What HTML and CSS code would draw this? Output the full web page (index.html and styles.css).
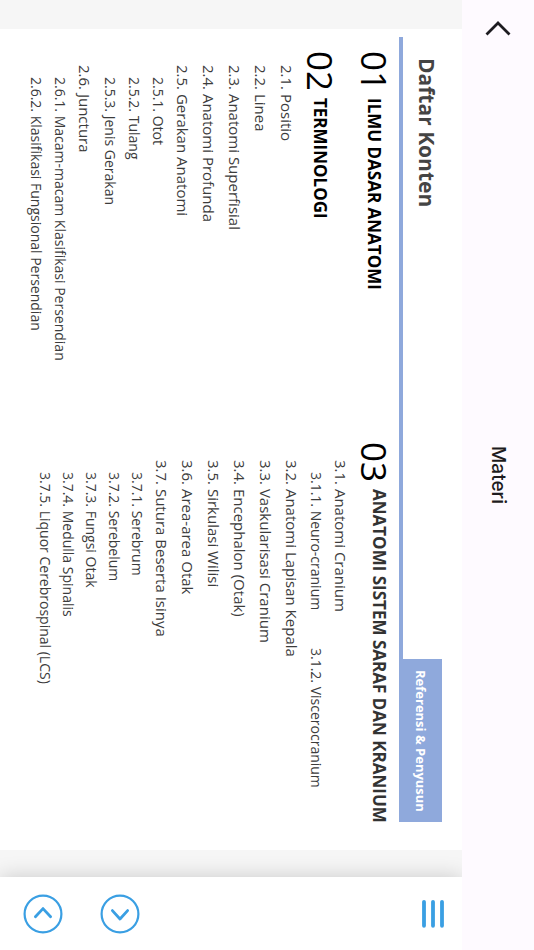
FILE: index.html
```html
<!DOCTYPE html>
<html lang="id">
<head>
<meta charset="utf-8">
<meta name="viewport" content="width=device-width, initial-scale=1">
<title>Materi</title>
<link rel="stylesheet" href="styles.css">
</head>
<body>
<div class="app">
  <header class="appbar">
    <button class="back" type="button" aria-label="Kembali">
      <svg width="28" height="18" viewBox="0 0 28 18" fill="none" stroke="#1d1b20" stroke-width="2.8"><path d="M2.500 15.500 14 4 25.500 15.500"/></svg>
    </button>
    <h1 class="appbar-title">Materi</h1>
  </header>
  <div class="content">
    <main class="viewer">
      <article class="slide">
        <div class="slide-head">
          <h2 class="slide-title">Daftar Konten</h2>
          <a class="tab" href="#referensi">Referensi &amp; Penyusun</a>
        </div>
        <div class="columns">
          <div class="column">
            <section class="chapter">
              <h3 class="chapter-head"><span class="num">01</span><span class="name">ILMU DASAR ANATOMI</span></h3>
            </section>
            <section class="chapter">
              <h3 class="chapter-head"><span class="num">02</span><span class="name">TERMINOLOGI</span></h3>
              <ul class="toc">
                <li><a href="#2-1">2.1. Positio</a></li>
                <li><a href="#2-2">2.2. Linea</a></li>
                <li><a href="#2-3">2.3. Anatomi Superfisial</a></li>
                <li><a href="#2-4">2.4. Anatomi Profunda</a></li>
                <li><a href="#2-5">2.5. Gerakan Anatomi</a></li>
                <li class="sub"><a href="#2-5-1">2.5.1. Otot</a></li>
                <li class="sub"><a href="#2-5-2">2.5.2. Tulang</a></li>
                <li class="sub"><a href="#2-5-3">2.5.3. Jenis Gerakan</a></li>
                <li><a href="#2-6">2.6. Junctura</a></li>
                <li class="sub"><a href="#2-6-1">2.6.1. Macam-macam Klasifikasi Persendian</a></li>
                <li class="sub"><a href="#2-6-2">2.6.2. Klasifikasi Fungsional Persendian</a></li>
              </ul>
            </section>
          </div>
          <div class="column column-wide">
            <section class="chapter">
              <h3 class="chapter-head raised"><span class="num">03</span><span class="name">ANATOMI SISTEM SARAF DAN KRANIUM</span></h3>
              <ul class="toc">
                <li><a href="#3-1">3.1. Anatomi Cranium</a></li>
                <li class="sub"><a href="#3-1-1">3.1.1. Neuro-cranium</a><a href="#3-1-2">3.1.2. Viscerocranium</a></li>
                <li><a href="#3-2">3.2. Anatomi Lapisan Kepala</a></li>
                <li><a href="#3-3">3.3. Vaskularisasi Cranium</a></li>
                <li><a href="#3-4">3.4. Encephalon (Otak)</a></li>
                <li><a href="#3-5">3.5. Sirkulasi Wilisi</a></li>
                <li><a href="#3-6">3.6. Area-area Otak</a></li>
                <li><a href="#3-7">3.7. Sutura Beserta Isinya</a></li>
                <li class="sub"><a href="#3-7-1">3.7.1. Serebrum</a></li>
                <li class="sub"><a href="#3-7-2">3.7.2. Serebelum</a></li>
                <li class="sub"><a href="#3-7-3">3.7.3. Fungsi Otak</a></li>
                <li class="sub"><a href="#3-7-4">3.7.4. Medulla Spinalis</a></li>
                <li class="sub"><a href="#3-7-5">3.7.5. Liquor Cerebrospinal (LCS)</a></li>
              </ul>
            </section>
          </div>
        </div>
      </article>
    </main>
    <nav class="toolbar" aria-label="Navigasi">
      <button class="tool menu" type="button" aria-label="Menu">
        <svg width="22" height="30" viewBox="0 0 22 30" stroke="#3a9fe3" stroke-width="3.800" stroke-linecap="round"><path d="M2 2.800V26.800M11 2.800V26.800M20 2.800V26.800"/></svg>
      </button>
      <button class="tool" type="button" aria-label="Berikutnya">
        <svg width="40" height="40" viewBox="0 0 40 40" fill="none" stroke="#3a9fe3" stroke-linecap="round" stroke-linejoin="round"><circle cx="20" cy="20" r="18.400" stroke-width="2.200"/><path d="M12.400 16.600 20 25 27.600 16.600" stroke-width="2.800"/></svg>
      </button>
      <button class="tool" type="button" aria-label="Sebelumnya">
        <svg width="40" height="40" viewBox="0 0 40 40" fill="none" stroke="#3a9fe3" stroke-linecap="round" stroke-linejoin="round"><circle cx="20" cy="20" r="18.400" stroke-width="2.200"/><path d="M12.400 22.800 20 14.600 27.600 22.800" stroke-width="2.800"/></svg>
      </button>
    </nav>
  </div>
</div>
</body>
</html>
```
FILE: styles.css
```css
/* The whole app is laid out sideways: lines run top to bottom, blocks right to left. */
html {
  writing-mode: vertical-rl;
  text-orientation: sideways;
}

body {
  margin: 0;
  font-family: "Open Sans", "Noto Sans", sans-serif;
  color: #3c3c3c;
  background: #fff;
}

* { box-sizing: border-box; }

h1, h2, h3, ul { margin: 0; padding: 0; }

ul { list-style: none; }

a { color: inherit; text-decoration: none; }

button {
  writing-mode: inherit;
  padding: 0;
  border: 0;
  background: none;
  cursor: pointer;
}

svg { display: block; }

.app {
  display: flex;
  flex-direction: column;
  block-size: 100vw;
  inline-size: 100vh;
  overflow: hidden;
}

.appbar {
  display: grid;
  grid-template-columns: 1fr auto 1fr;
  align-items: center;
  flex: none;
  block-size: 72px;
  padding-inline: 19px;
  background: #fefaff;
  position: relative;
  z-index: 2;
}

.back { justify-self: start; }

.appbar-title {
  font-family: Inter, "Open Sans", sans-serif;
  font-size: 19px;
  font-weight: 500;
  line-height: 24px;
  color: #1d1b20;
}

.content {
  display: flex;
  flex: 1;
  min-block-size: 0;
}

.viewer {
  display: flex;
  flex: 1;
  min-inline-size: 0;
  padding-inline: 29px 27px;
  background: #f6f6f6;
}

.slide {
  flex: 1;
  min-inline-size: 0;
  padding-block-start: 20px;
  background: #fff;
}

.slide-head {
  display: flex;
  justify-content: space-between;
  block-size: 43px;
  margin-inline: 8px 28px;
  padding-inline-start: 21px;
  border-block-end: 4px solid #8fa9dc;
}

.slide-title {
  font-size: 21px;
  line-height: 30px;
  color: #444;
}

.tab {
  font-size: 13px;
  font-weight: 700;
  line-height: 43px;
  color: #fff;
  background: #8fa9dc;
  block-size: 43px;
  min-inline-size: 163px;
  text-align: center;
}

.columns {
  display: grid;
  grid-template-columns: 1fr 1fr;
  padding-block-start: 5px;
  padding-inline: 22px 17px;
}

.column {
  display: flex;
  flex-direction: column;
  gap: 14px;
  min-inline-size: 0;
}

.chapter-head {
  display: flex;
  align-items: center;
  gap: 7px;
  block-size: 40px;
  color: #000;
  white-space: nowrap;
}

.num {
  font-size: 35px;
  font-weight: 400;
  line-height: 40px;
}

.name {
  font-size: 17px;
  font-weight: 700;
  line-height: 30px;
}

.raised { align-items: flex-start; }

.raised .name { color: #333; }

.toc {
  padding-inline-start: 14px;
  font-size: 15px;
  line-height: 26px;
  white-space: nowrap;
}

.sub {
  display: flex;
  gap: 38px;
  padding-inline-start: 12px;
  font-size: 14px;
  line-height: 24px;
}

.column-wide .toc { padding-inline-start: 18px; }

.column-wide .sub { line-height: 23px; }

.toolbar {
  display: flex;
  flex-direction: column;
  align-items: center;
  gap: 37px;
  flex: none;
  inline-size: 73px;
  padding-block: 18px 23px;
  background: #fff;
  box-shadow: 0 0 20px rgb(0 0 0 / 18%);
  position: relative;
  z-index: 1;
}

.menu { margin-block-end: auto; }
```
